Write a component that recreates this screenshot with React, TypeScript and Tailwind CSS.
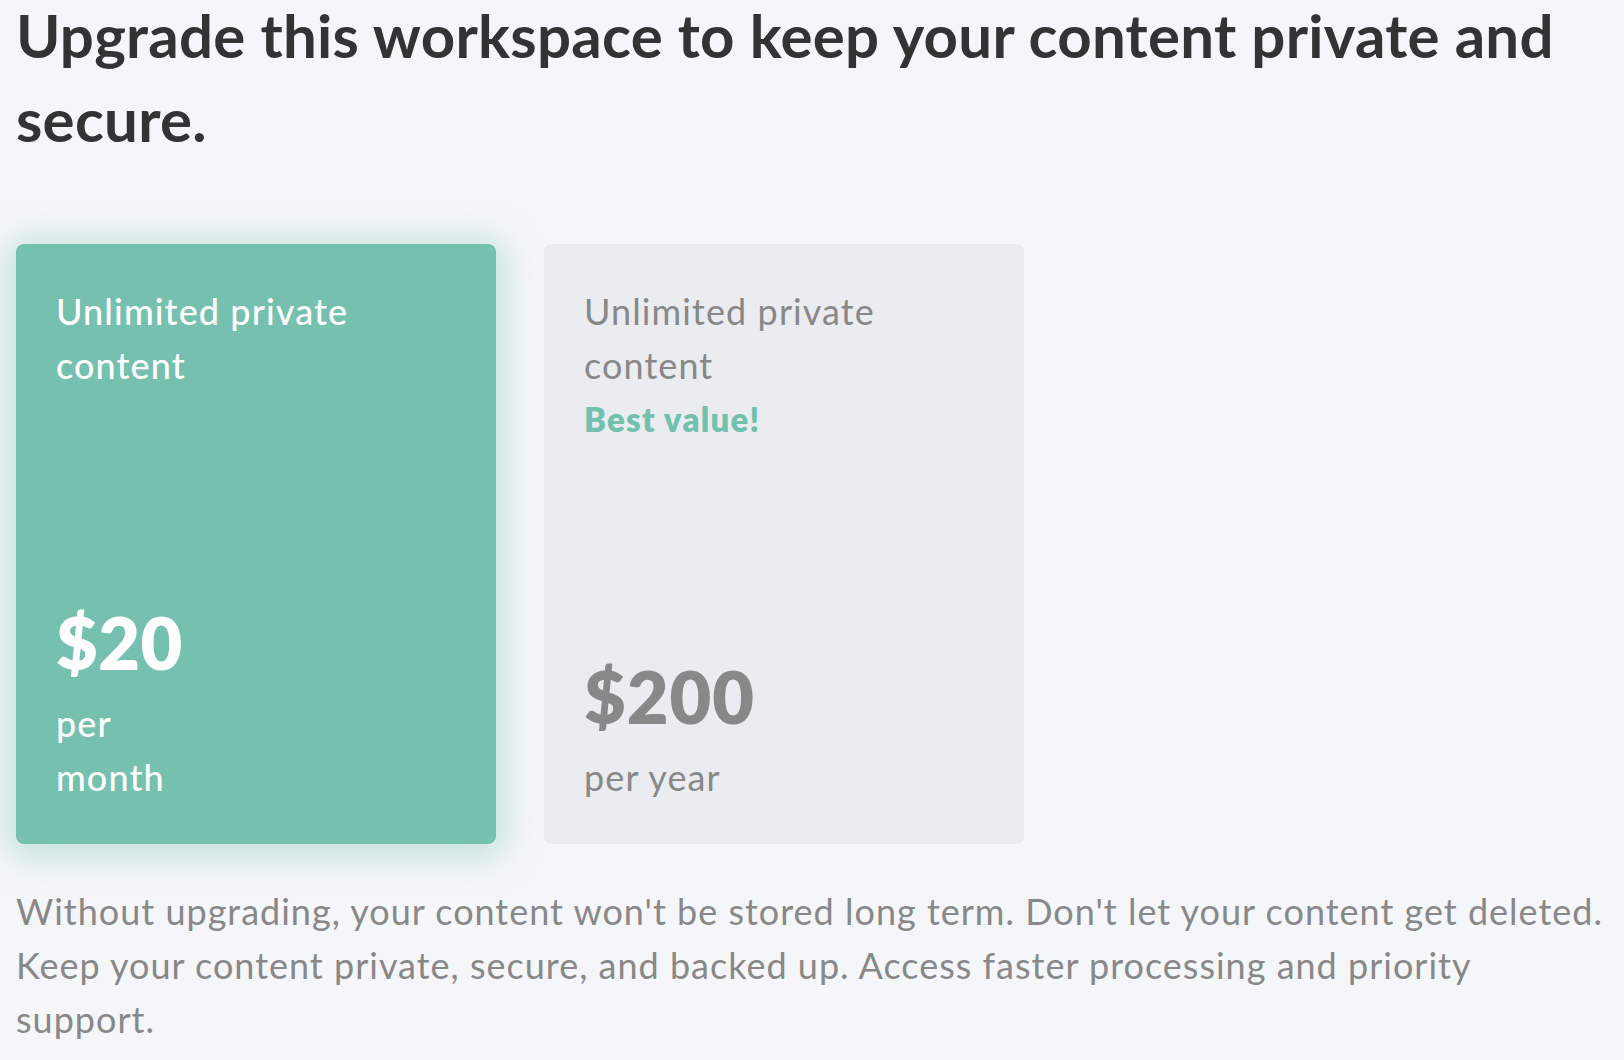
import React from 'react';

const font = { fontFamily: 'Lato, "Open Sans", sans-serif' };

export default function App() {
  return (
    <div className="min-h-screen bg-[#f5f6fa] px-4 overflow-hidden" style={font}>
      <h1 className="-mt-[7px] text-[60px] leading-[84px] font-bold tracking-[0.25px] text-[#333333]">
        Upgrade this workspace to keep your content private and
        <br />
        secure.
      </h1>

      <div className="mt-[83px] flex gap-[48px]">
        {/* monthly plan, selected */}
        <div className="w-[480px] h-[600px] rounded-lg bg-[#76c0b0] p-10 flex flex-col justify-between text-white shadow-[0_4px_36px_8px_rgba(118,192,176,0.4)]">
          <div className="text-[36px] leading-[54px] font-medium tracking-[1.1px]">
            Unlimited private
            <br />
            content
          </div>
          <div>
            <div className="text-[72px] leading-[108px] font-extrabold tracking-[0.5px]">$20</div>
            <div className="text-[36px] leading-[54px] font-medium tracking-[1.1px]">
              per
              <br />
              month
            </div>
          </div>
        </div>

        {/* yearly plan */}
        <div className="w-[480px] h-[600px] rounded-lg bg-[#ebecf0] p-10 flex flex-col justify-between text-[#888888]">
          <div>
            <div className="text-[36px] leading-[54px] tracking-[1.1px]">
              Unlimited private
              <br />
              content
            </div>
            <div className="text-[33px] leading-[54px] font-extrabold tracking-[1.2px] text-[#72c1ae]">Best value!</div>
          </div>
          <div>
            <div className="text-[72px] leading-[108px] font-extrabold tracking-[1px]">$200</div>
            <div className="text-[36px] leading-[54px] tracking-[1.1px]">per year</div>
          </div>
        </div>
      </div>

      <p className="mt-[40px] text-[36px] leading-[54px] tracking-[1px] text-[#888888] whitespace-nowrap">
        Without upgrading, your content won't be stored long term. Don't let your content get deleted.
        <br />
        Keep your content private, secure, and backed up. Access faster processing and priority
        <br />
        support.
      </p>
    </div>
  );
}
